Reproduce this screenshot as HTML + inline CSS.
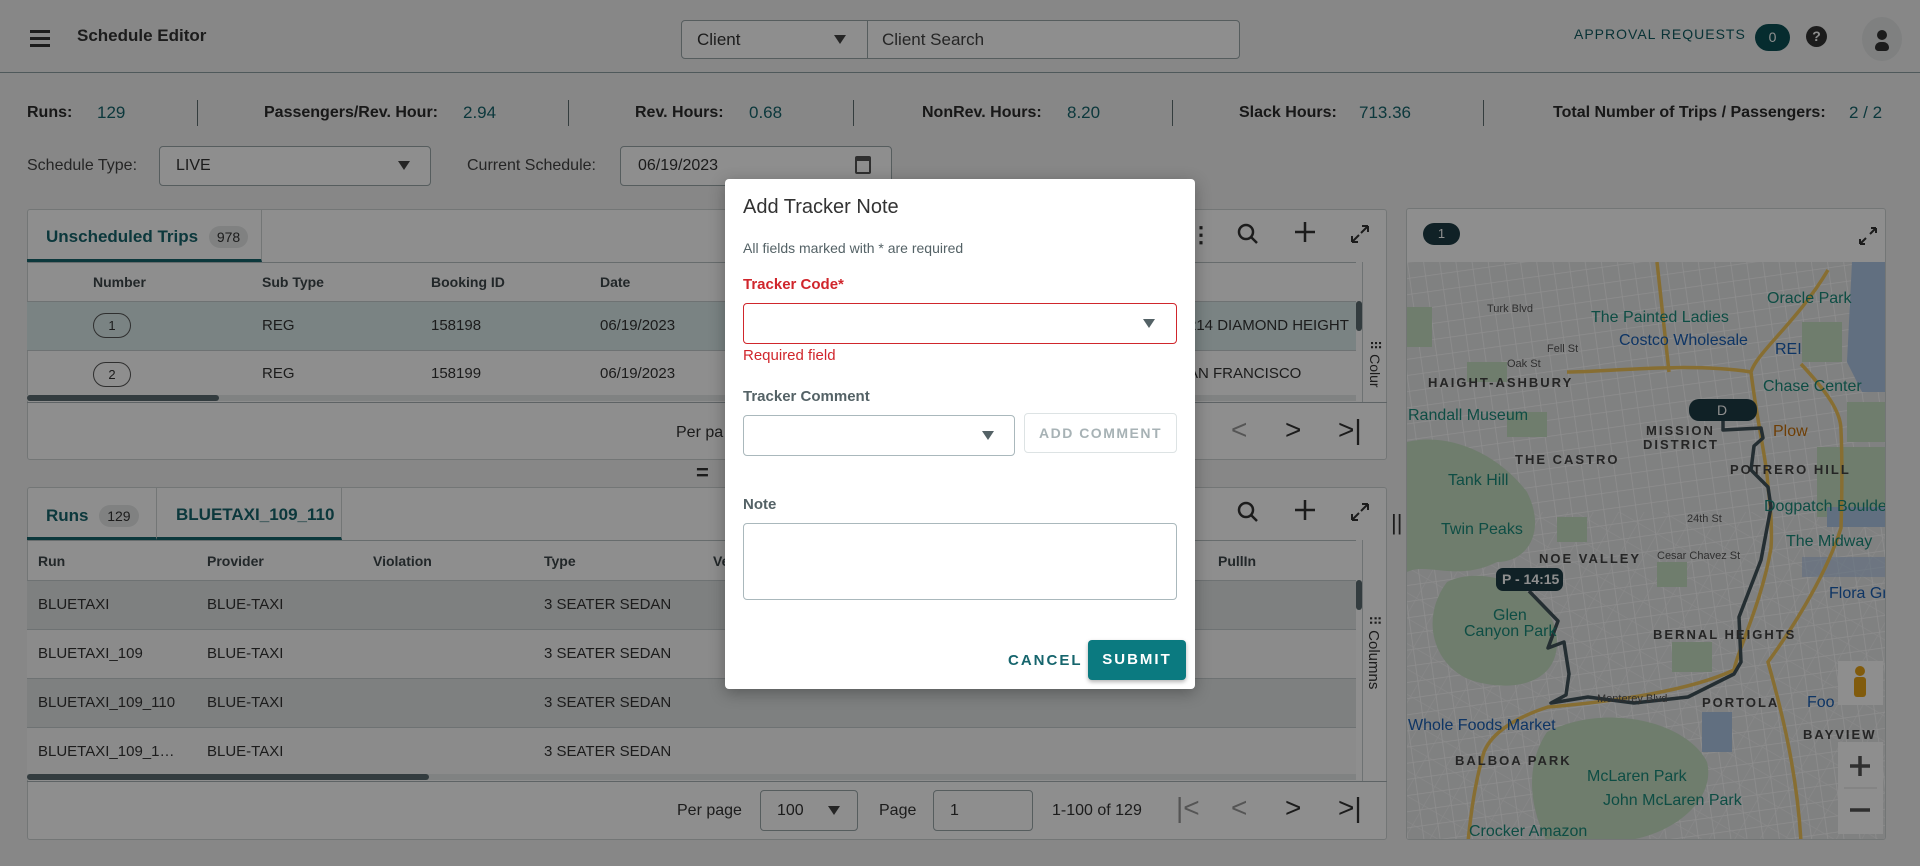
<!DOCTYPE html>
<html><head><meta charset="utf-8"><style>
*{box-sizing:border-box;margin:0;padding:0}
body{width:1920px;height:866px;overflow:hidden;background:#f2f3f3;font-family:"Liberation Sans",sans-serif;color:#333;position:relative}
.a{position:absolute}
.t{position:absolute;white-space:nowrap}
.lbl{font-size:16px;font-weight:bold;color:#2b2b2b}
.val{font-size:17px;color:#17656d}
.vd{position:absolute;width:1px;height:26px;background:#5e6e70;top:100px}
.panel{position:absolute;background:#fff;border:1px solid #cfd4d5;border-radius:3px}
.th{font-size:14px;font-weight:bold;color:#3d474a}
.td{font-size:15px;color:#333}
.inp{position:absolute;border:1px solid #9aa7aa;border-radius:4px;background:#fff}
.tri{position:absolute;width:0;height:0;border-left:6px solid transparent;border-right:6px solid transparent;border-top:9px solid #444}
.badge{display:inline-block;background:#e6e8e8;border-radius:12px;font-size:14px;padding:3px 8px;color:#333;font-weight:normal}
.overlay{position:absolute;left:0;top:0;width:1920px;height:866px;background:rgba(0,0,0,0.443)}
</style></head><body>
<!-- header -->
<div class="a" style="left:0;top:0;width:1920px;height:73px;background:#f2f3f3;border-bottom:1px solid #8fa0a3"></div>
<div class="a" style="left:30px;top:30px;width:20px;height:3px;background:#333;box-shadow:0 7px 0 #333,0 14px 0 #333"></div>
<div class="t" style="left:77px;top:26px;font-size:17px;font-weight:bold;color:#333">Schedule Editor</div>
<div class="inp" style="left:681px;top:20px;width:187px;height:39px;border-radius:4px 0 0 4px"></div>
<div class="t" style="left:697px;top:30px;font-size:17px">Client</div>
<div class="tri" style="left:834px;top:35px"></div>
<div class="inp" style="left:867px;top:20px;width:373px;height:39px;border-radius:0 4px 4px 0"></div>
<div class="t" style="left:882px;top:30px;font-size:17px;color:#444">Client Search</div>
<div class="t" style="left:1574px;top:26px;font-size:14px;letter-spacing:1px;color:#105a60">APPROVAL REQUESTS</div>
<div class="a" style="left:1755px;top:24px;width:35px;height:27px;border-radius:14px;background:#0b4f55;color:#fff;font-size:14px;text-align:center;line-height:27px">0</div>
<div class="a" style="left:1806px;top:26px;width:21px;height:21px;border-radius:50%;background:#333;color:#fff;font-size:14px;font-weight:bold;text-align:center;line-height:21px">?</div>
<div class="a" style="left:1862px;top:17px;width:40px;height:44px;border-radius:50%;background:#e4e6e6"></div>
<div class="a" style="left:1877px;top:30px;width:10px;height:10px;border-radius:50%;background:#333"></div>
<div class="a" style="left:1875px;top:42px;width:14px;height:9px;border-radius:7px 7px 4px 4px;background:#333"></div>
<!-- stats -->
<div class="t lbl" style="left:27px;top:104px">Runs:</div><div class="t val" style="left:97px;top:103px">129</div>
<div class="vd" style="left:197px"></div>
<div class="t lbl" style="left:264px;top:104px">Passengers/Rev. Hour:</div><div class="t val" style="left:463px;top:103px">2.94</div>
<div class="vd" style="left:568px"></div>
<div class="t lbl" style="left:635px;top:104px">Rev. Hours:</div><div class="t val" style="left:749px;top:103px">0.68</div>
<div class="vd" style="left:853px"></div>
<div class="t lbl" style="left:922px;top:104px">NonRev. Hours:</div><div class="t val" style="left:1067px;top:103px">8.20</div>
<div class="vd" style="left:1172px"></div>
<div class="t lbl" style="left:1239px;top:104px">Slack Hours:</div><div class="t val" style="left:1359px;top:103px">713.36</div>
<div class="vd" style="left:1483px"></div>
<div class="t lbl" style="left:1553px;top:104px">Total Number of Trips / Passengers:</div><div class="t val" style="left:1849px;top:103px">2 / 2</div>
<div class="t" style="left:27px;top:157px;font-size:16px;color:#444">Schedule Type:</div>
<div class="inp" style="left:159px;top:146px;width:272px;height:40px"></div>
<div class="t" style="left:176px;top:157px;font-size:16px">LIVE</div>
<div class="tri" style="left:398px;top:161px"></div>
<div class="t" style="left:467px;top:157px;font-size:16px;color:#444">Current Schedule:</div>
<div class="inp" style="left:620px;top:146px;width:272px;height:40px"></div>
<div class="t" style="left:638px;top:157px;font-size:16px">06/19/2023</div>
<div class="a" style="left:855px;top:156px;width:16px;height:18px;border:2px solid #555;border-top-width:5px;border-radius:2px"></div>

<!-- top panel -->
<div class="panel" style="left:27px;top:209px;width:1360px;height:251px"></div>
<div class="a" style="left:27px;top:209px;width:235px;height:53px;border-right:1px solid #cfd4d5;border-bottom:3px solid #17656d"></div>
<div class="t" style="left:46px;top:226px;font-size:17px;font-weight:bold;color:#17656d">Unscheduled Trips <span class="badge" style="margin-left:6px">978</span></div>
<div class="a" style="left:27px;top:262px;width:1329px;height:1px;background:#b9c2c4"></div>
<div class="t th" style="left:93px;top:274px">Number</div>
<div class="t th" style="left:262px;top:274px">Sub Type</div>
<div class="t th" style="left:431px;top:274px">Booking ID</div>
<div class="t th" style="left:600px;top:274px">Date</div>
<div class="a" style="left:27px;top:301px;width:1329px;height:50px;background:#dbebeb;border-top:1px solid #c5cdce;border-bottom:1px solid #c5cdce"></div>
<div class="a" style="left:93px;top:313px;width:38px;height:25px;border:1px solid #555;border-radius:13px;font-size:13px;text-align:center;line-height:23px">1</div>
<div class="t td" style="left:262px;top:317px">REG</div><div class="t td" style="left:431px;top:317px">158198</div><div class="t td" style="left:600px;top:317px">06/19/2023</div>
<div class="t td" style="left:1188px;top:317px">214 DIAMOND HEIGHT</div>
<div class="a" style="left:93px;top:362px;width:38px;height:25px;border:1px solid #555;border-radius:13px;font-size:13px;text-align:center;line-height:23px">2</div>
<div class="t td" style="left:262px;top:365px">REG</div><div class="t td" style="left:431px;top:365px">158199</div><div class="t td" style="left:600px;top:365px">06/19/2023</div>
<div class="t td" style="left:1188px;top:365px">AN FRANCISCO</div>
<div class="a" style="left:27px;top:395px;width:1329px;height:6px;background:#e6e9e9"></div>
<div class="a" style="left:27px;top:395px;width:192px;height:6px;background:#5d6d71;border-radius:3px"></div>
<div class="a" style="left:27px;top:402px;width:1360px;height:1px;background:#aab3b5"></div>
<div class="a" style="left:1356px;top:301px;width:6px;height:30px;background:#5d6d71;border-radius:3px"></div>
<div class="a" style="left:1362px;top:262px;width:1px;height:140px;background:#c5cdce"></div>
<div class="t" style="top:340px;font-size:14px;color:#333;transform:rotate(90deg);transform-origin:0 0;left:1383px">⠿ Colur</div>
<div class="t" style="left:676px;top:424px;font-size:16px">Per pa</div>
<div class="t" style="left:1231px;top:414px;font-size:28px;color:#999">&lt;</div>
<div class="t" style="left:1285px;top:414px;font-size:28px;color:#333">&gt;</div>
<div class="t" style="left:1338px;top:414px;font-size:28px;color:#333">&gt;|</div>
<div class="t" style="left:1190px;top:222px;font-size:22px;font-weight:bold;color:#333">⋮</div>
<svg class="a" style="left:1236px;top:222px" width="24" height="24"><circle cx="10" cy="10" r="7" fill="none" stroke="#333" stroke-width="2.5"/><path d="M15 15l6 6" stroke="#333" stroke-width="2.5"/></svg>
<svg class="a" style="left:1293px;top:220px" width="24" height="24"><path d="M12 2v20M2 12h20" stroke="#333" stroke-width="2.5"/></svg>
<svg class="a" style="left:1348px;top:222px" width="24" height="24"><path d="M4 20l7-7M4 20v-6M4 20h6M20 4l-7 7M20 4v6M20 4h-6" stroke="#333" stroke-width="2" fill="none"/></svg>
<div class="t" style="left:696px;top:460px;font-size:22px;font-weight:bold;color:#333">=</div>

<!-- bottom panel -->
<div class="panel" style="left:27px;top:487px;width:1360px;height:353px"></div>
<div class="a" style="left:27px;top:487px;width:130px;height:53px;border-right:1px solid #cfd4d5;border-bottom:3px solid #17656d"></div>
<div class="t" style="left:46px;top:505px;font-size:17px;font-weight:bold;color:#17656d">Runs <span class="badge" style="margin-left:6px">129</span></div>
<div class="a" style="left:157px;top:487px;width:185px;height:53px;border-right:1px solid #cfd4d5;border-bottom:3px solid #17656d"></div>
<div class="t" style="left:176px;top:505px;font-size:17px;font-weight:bold;color:#17656d">BLUETAXI_109_110</div>
<div class="a" style="left:27px;top:540px;width:1329px;height:1px;background:#b9c2c4"></div>
<div class="t th" style="left:38px;top:553px">Run</div><div class="t th" style="left:207px;top:553px">Provider</div><div class="t th" style="left:373px;top:553px">Violation</div><div class="t th" style="left:544px;top:553px">Type</div><div class="t th" style="left:713px;top:553px">Ve</div><div class="t th" style="left:1218px;top:553px">PullIn</div>
<div class="a" style="left:27px;top:580px;width:1329px;height:49px;background:#e3e6e6;border-top:1px solid #c5cdce"></div>
<div class="a" style="left:27px;top:629px;width:1329px;height:49px;background:#fafafa;border-top:1px solid #c5cdce"></div>
<div class="a" style="left:27px;top:678px;width:1329px;height:49px;background:#e3e6e6;border-top:1px solid #c5cdce"></div>
<div class="a" style="left:27px;top:727px;width:1329px;height:49px;background:#fafafa;border-top:1px solid #c5cdce"></div>
<div class="t td" style="left:38px;top:596px">BLUETAXI</div><div class="t td" style="left:207px;top:596px">BLUE-TAXI</div><div class="t td" style="left:544px;top:596px">3 SEATER SEDAN</div>
<div class="t td" style="left:38px;top:645px">BLUETAXI_109</div><div class="t td" style="left:207px;top:645px">BLUE-TAXI</div><div class="t td" style="left:544px;top:645px">3 SEATER SEDAN</div>
<div class="t td" style="left:38px;top:694px">BLUETAXI_109_110</div><div class="t td" style="left:207px;top:694px">BLUE-TAXI</div><div class="t td" style="left:544px;top:694px">3 SEATER SEDAN</div>
<div class="t td" style="left:38px;top:743px">BLUETAXI_109_1…</div><div class="t td" style="left:207px;top:743px">BLUE-TAXI</div><div class="t td" style="left:544px;top:743px">3 SEATER SEDAN</div>
<div class="a" style="left:27px;top:774px;width:1329px;height:6px;background:#e6e9e9"></div>
<div class="a" style="left:27px;top:774px;width:402px;height:6px;background:#5d6d71;border-radius:3px"></div>
<div class="a" style="left:27px;top:781px;width:1360px;height:1px;background:#aab3b5"></div>
<div class="a" style="left:1356px;top:580px;width:6px;height:30px;background:#5d6d71;border-radius:3px"></div>
<div class="a" style="left:1362px;top:540px;width:1px;height:241px;background:#c5cdce"></div>
<div class="t" style="left:1383px;top:615px;font-size:15px;color:#333;transform:rotate(90deg);transform-origin:0 0">⠿ Columns</div>
<div class="t" style="left:677px;top:802px;font-size:16px">Per page</div>
<div class="inp" style="left:760px;top:790px;width:98px;height:41px"></div>
<div class="t" style="left:777px;top:802px;font-size:16px">100</div><div class="tri" style="left:828px;top:806px"></div>
<div class="t" style="left:879px;top:802px;font-size:16px">Page</div>
<div class="inp" style="left:933px;top:790px;width:100px;height:41px"></div>
<div class="t" style="left:950px;top:802px;font-size:16px">1</div>
<div class="t" style="left:1052px;top:802px;font-size:16px">1-100 of 129</div>
<div class="t" style="left:1176px;top:792px;font-size:28px;color:#999">|&lt;</div>
<div class="t" style="left:1231px;top:792px;font-size:28px;color:#999">&lt;</div>
<div class="t" style="left:1285px;top:792px;font-size:28px;color:#333">&gt;</div>
<div class="t" style="left:1338px;top:792px;font-size:28px;color:#333">&gt;|</div>
<svg class="a" style="left:1236px;top:500px" width="24" height="24"><circle cx="10" cy="10" r="7" fill="none" stroke="#333" stroke-width="2.5"/><path d="M15 15l6 6" stroke="#333" stroke-width="2.5"/></svg>
<svg class="a" style="left:1293px;top:498px" width="24" height="24"><path d="M12 2v20M2 12h20" stroke="#333" stroke-width="2.5"/></svg>
<svg class="a" style="left:1348px;top:500px" width="24" height="24"><path d="M4 20l7-7M4 20v-6M4 20h6M20 4l-7 7M20 4v6M20 4h-6" stroke="#333" stroke-width="2" fill="none"/></svg>
<div class="t" style="left:1391px;top:510px;font-size:22px;color:#333">||</div>

<!-- map -->
<div class="panel" style="left:1406px;top:208px;width:480px;height:632px;overflow:hidden">
<div class="a" style="left:16px;top:14px;width:37px;height:22px;border-radius:11px;background:#1d3c45;color:#fff;font-size:13px;text-align:center;line-height:22px">1</div>
<svg class="a" style="left:450px;top:16px" width="22" height="22"><path d="M3 19l6-6M3 19v-5M3 19h5M19 3l-6 6M19 3v5M19 3h-5" stroke="#333" stroke-width="2" fill="none"/></svg>
<svg class="a" style="left:0;top:53px" width="480" height="580">
<defs>
<pattern id="g1" width="16" height="16" patternUnits="userSpaceOnUse" patternTransform="rotate(-8)"><path d="M0 0H16M0 0V16" stroke="#fff" stroke-width="1.6"/></pattern>
<pattern id="g2" width="22" height="22" patternUnits="userSpaceOnUse" patternTransform="rotate(30)"><path d="M0 0H22M0 0V22" stroke="#fafafa" stroke-width="1.4"/></pattern>
</defs>
<rect width="480" height="580" fill="#e6e7e8"/>
<rect width="480" height="580" fill="url(#g1)"/>
<rect x="0" y="250" width="480" height="330" fill="url(#g2)" opacity=".7"/>
<g fill="#c7e0c4">
<rect x="0" y="45" width="25" height="40"/><rect x="60" y="100" width="40" height="20"/><rect x="100" y="150" width="40" height="25"/>
<path d="M0 180 C40 170 90 190 120 230 C140 270 120 300 90 300 C50 320 20 300 0 310Z"/>
<path d="M40 320 C80 300 150 330 150 380 C150 420 110 430 70 420 C30 410 10 360 40 320Z"/>
<path d="M140 470 C200 440 280 460 300 500 C310 540 260 580 200 580 L140 580 C120 540 120 500 140 470Z"/>
<rect x="150" y="255" width="30" height="25"/><rect x="265" y="380" width="40" height="30"/><rect x="410" y="185" width="70" height="70"/>
<rect x="395" y="60" width="40" height="40"/><rect x="440" y="140" width="40" height="40"/><rect x="250" y="300" width="30" height="25"/>
</g>
<g fill="#aec7e6"><path d="M445 0H480V130H455L440 100Z"/><rect x="420" y="245" width="60" height="20"/><rect x="295" y="450" width="30" height="40"/><rect x="395" y="295" width="85" height="20" opacity=".6"/></g>
<g fill="none" stroke="#f2c65a" stroke-width="3.5">
<path d="M421 8 C390 60 350 90 344 110 C350 160 360 200 361 225 C366 260 364 286 364 286 C355 340 330 390 327 408 C280 430 200 440 141 445 C110 455 85 470 77 490 C68 520 64 550 61 580"/>
<path d="M394 102 C420 130 434 150 434 168 C436 210 434 266 434 266 C420 310 390 360 361 400 C375 450 390 510 394 580"/>
<path d="M250 0 L262 110 M160 110 C200 110 280 100 344 110"/>
</g>
<path d="M122 329 L151 359 L141 386 L157 380 L162 412 L159 433 L144 441 L181 435 L227 441 L281 435 L327 412 L334 400 L332 355 L354 298 L364 245 L361 225 L344 208 L347 184 L356 176 L354 166 L316 168 L316 159" stroke="#41535a" stroke-width="3.5" fill="none" stroke-linejoin="round"/>
<rect x="282" y="137" width="68" height="22" rx="10" fill="#1d3c45"/><text x="310" y="153" font-size="14" fill="#fff" font-family="Liberation Sans">D</text>
<rect x="89" y="306" width="67" height="23" rx="7" fill="#1d3c45"/><text x="95" y="322" font-size="14" fill="#fff" font-family="Liberation Sans" font-weight="bold">P - 14:15</text>
<g font-family="Liberation Sans" font-size="16">
<text x="184" y="60" fill="#1a8a7a">The Painted Ladies</text><text x="360" y="41" fill="#1a8a7a">Oracle Park</text>
<text x="212" y="83" fill="#1a5fb4">Costco Wholesale</text><text x="368" y="92" fill="#1a5fb4">REI</text>
<text x="356" y="129" fill="#1a8a7a">Chase Center</text>
<text x="1" y="158" fill="#1a8a7a">Randall Museum</text>
<text x="366" y="174" fill="#c5700a">Plow</text>
<text x="41" y="223" fill="#1a8a7a">Tank Hill</text>
<text x="357" y="249" fill="#1a8a7a">Dogpatch Boulders</text><text x="34" y="272" fill="#1a8a7a">Twin Peaks</text>
<text x="379" y="284" fill="#1a8a7a">The Midway</text>
<text x="422" y="336" fill="#1a5fb4">Flora Gru</text><text x="86" y="358" fill="#1a8a7a">Glen</text><text x="57" y="374" fill="#1a8a7a">Canyon Park</text>
<text x="1" y="468" fill="#1a5fb4">Whole Foods Market</text>
<text x="180" y="519" fill="#1a8a7a">McLaren Park</text>
<text x="196" y="543" fill="#1a8a7a">John McLaren Park</text><text x="62" y="574" fill="#1a8a7a">Crocker Amazon</text>
<text x="400" y="445" fill="#1a5fb4">Foo</text>
</g>
<g font-family="Liberation Sans" font-size="13" font-weight="bold" fill="#444" letter-spacing="2">
<text x="21" y="125">HAIGHT-ASHBURY</text><text x="239" y="173">MISSION</text><text x="236" y="187">DISTRICT</text>
<text x="108" y="202">THE CASTRO</text><text x="323" y="212">POTRERO HILL</text><text x="132" y="301">NOE VALLEY</text>
<text x="246" y="377">BERNAL HEIGHTS</text><text x="295" y="445">PORTOLA</text><text x="396" y="477">BAYVIEW</text><text x="48" y="503">BALBOA PARK</text>
</g>
<g font-family="Liberation Sans" font-size="11" fill="#555">
<text x="80" y="50">Turk Blvd</text><text x="140" y="90">Fell St</text><text x="100" y="105">Oak St</text><text x="190" y="440">Monterey Blvd</text><text x="280" y="260">24th St</text><text x="250" y="297">Cesar Chavez St</text>
</g>
<rect x="431" y="399" width="45" height="44" fill="#fff"/><circle cx="453" cy="409" r="5" fill="#e8a317"/><rect x="447" y="415" width="12" height="20" rx="3" fill="#e8a317"/>
<rect x="431" y="480" width="45" height="92" fill="#fff"/><path d="M443 504h20M453 494v20M443 548h20" stroke="#555" stroke-width="3.5"/><path d="M437 526h33" stroke="#ddd"/>
</svg>
</div>

<div class="overlay"></div>

<!-- dialog -->
<div class="a" style="left:725px;top:179px;width:470px;height:510px;background:#fff;border-radius:4px;box-shadow:0 4px 16px rgba(0,0,0,.3)"></div>
<div class="t" style="left:743px;top:196px;font-size:20px;color:#333">Add Tracker Note</div>
<div class="t" style="left:743px;top:240px;font-size:14px;color:#546266">All fields marked with * are required</div>
<div class="t" style="left:743px;top:276px;font-size:15px;font-weight:bold;color:#d0262c">Tracker Code*</div>
<div class="a" style="left:743px;top:303px;width:434px;height:41px;border:1px solid #d0262c;border-radius:4px"></div>
<div class="tri" style="left:1143px;top:319px;border-top-color:#546266"></div>
<div class="t" style="left:743px;top:347px;font-size:15px;color:#d0262c">Required field</div>
<div class="t" style="left:743px;top:388px;font-size:15px;font-weight:bold;color:#546266">Tracker Comment</div>
<div class="a" style="left:743px;top:415px;width:272px;height:41px;border:1px solid #aab8bc;border-radius:4px"></div>
<div class="tri" style="left:982px;top:431px;border-top-color:#546266"></div>
<div class="a" style="left:1024px;top:413px;width:153px;height:40px;border:1px solid #dde3e4;border-radius:4px;color:#a7b2b5;font-size:14px;font-weight:bold;letter-spacing:1.5px;text-align:center;line-height:38px">ADD COMMENT</div>
<div class="t" style="left:743px;top:496px;font-size:15px;font-weight:bold;color:#546266">Note</div>
<div class="a" style="left:743px;top:523px;width:434px;height:77px;border:1px solid #aab8bc;border-radius:4px"></div>
<div class="t" style="left:1008px;top:652px;font-size:15px;font-weight:bold;letter-spacing:2px;color:#16656d">CANCEL</div>
<div class="a" style="left:1088px;top:640px;width:98px;height:40px;background:#0b7a80;border-radius:4px;color:#fff;font-size:15px;font-weight:bold;letter-spacing:2px;text-align:center;line-height:40px;box-shadow:0 2px 4px rgba(0,0,0,.3)">SUBMIT</div>
</body></html>
